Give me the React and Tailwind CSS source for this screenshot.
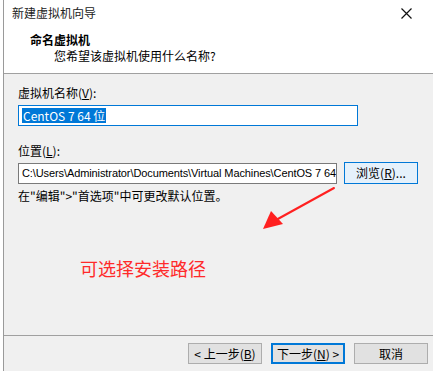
import React from 'react';

const font = { fontFamily: '"Noto Sans CJK SC", "Noto Sans", sans-serif' };

const Btn = ({ children, primary }) => (
  <div
    className={`w-[74px] h-[21px] flex items-center justify-center text-[12px] text-black ${
      primary ? 'border-2 border-[#0078d7] bg-[#e1e1e1]' : 'border border-[#adadad] bg-[#e1e1e1]'
    }`}
  >
    {children}
  </div>
);

export default function App() {
  return (
    <div className="w-[433px] h-[371px] bg-white overflow-hidden" style={font}>
      <div className="ml-[3px] h-full border-l border-[#9a9a9a] flex flex-col relative">
        {/* header */}
        <div className="h-[74px] bg-white border-b border-[#a0a0a0] shrink-0">
          <div className="flex items-center justify-between h-[26px] pl-[8px] pr-[21px]">
            <span className="text-[12px] text-[#222] leading-none">新建虚拟机向导</span>
            <svg width="11" height="11" viewBox="0 0 11 11">
              <path d="M0.5 0.5 L10.5 10.5 M10.5 0.5 L0.5 10.5" stroke="#111" strokeWidth="1.2" />
            </svg>
          </div>
          <div className="pl-[26px] pt-[6px] text-[12px] font-bold leading-[16px] text-black">命名虚拟机</div>
          <div className="pl-[50px] text-[12px] leading-[16px] text-black">您希望该虚拟机使用什么名称?</div>
        </div>

        {/* body */}
        <div className="flex-1 bg-[#f0f0f0] flex flex-col pl-[14px] text-[12px] text-black">
          <div className="mt-[11px] leading-[16px]">
            虚拟机名称(<span className="underline">V</span>):
          </div>
          <div className="mt-[4px] w-[340px] h-[21px] bg-white border border-[#0078d7] flex items-center pl-[3px]">
            <span className="bg-[#0078d7] text-white leading-[15px] px-[1px]">CentOS 7 64 位</span>
          </div>
          <div className="mt-[17px] leading-[16px]">
            位置(<span className="underline">L</span>):
          </div>
          <div className="mt-[3px] flex items-center gap-[7px]">
            <div
              className="w-[319px] h-[21px] shrink-0 bg-white border border-[#7a7a7a] flex items-center pl-[3px] whitespace-nowrap overflow-hidden text-[11px] tracking-[-0.1px]"
              style={{ fontFamily: '"Liberation Sans", sans-serif' }}
            >
              C:\Users\Administrator\Documents\Virtual Machines\CentOS 7 64
            </div>
            <div className="w-[74px] h-[22px] shrink-0 border border-[#0078d7] bg-[#e5f1fb] flex items-center justify-center">
              浏览(<span className="underline">R</span>)...
            </div>
          </div>
          <div className="mt-[4px] leading-[16px]">在"编辑"&gt;"首选项"中可更改默认位置。</div>
          <div className="mt-[53px] ml-[62px] text-[18px] leading-[22px] text-[#ff2a2a]">可选择安装路径</div>
        </div>

        {/* footer */}
        <div className="h-[36px] bg-[#f0f0f0] border-t border-[#a0a0a0] shrink-0 flex items-start justify-end gap-[9px] pt-[7px] pr-[5px]">
          <Btn>
            &lt; 上一步(<span className="underline">B</span>)
          </Btn>
          <Btn primary>
            下一步(<span className="underline">N</span>) &gt;
          </Btn>
          <Btn>取消</Btn>
        </div>

        {/* annotation arrow */}
        <svg className="absolute left-[254px] top-[186px]" width="80" height="48" viewBox="0 0 80 48">
          <path d="M76 2 L18 34" stroke="#ff2020" strokeWidth="2" strokeLinecap="round" />
          <path d="M5 43 L13 25 L25 38 Z" fill="#ff2020" />
        </svg>
      </div>
    </div>
  );
}
